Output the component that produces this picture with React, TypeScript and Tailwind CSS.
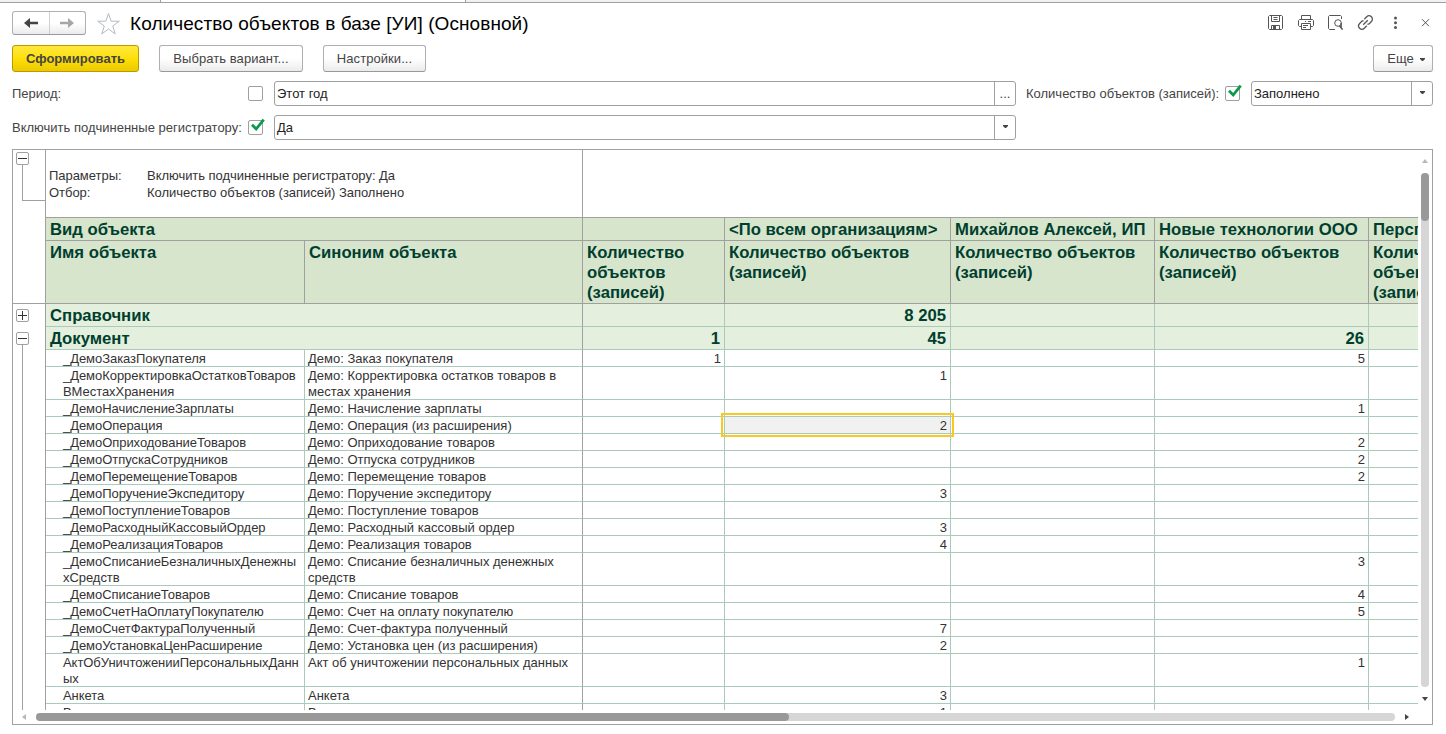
import type { ReactNode } from 'react'

type Row = {
  name: string[]
  synonym: string[]
  values: [string, string, string, string]
  active?: boolean
}

const rows: Row[] = [
  { name: ['_ДемоЗаказПокупателя'], synonym: ['Демо: Заказ покупателя'], values: ['1', '', '', '5'] },
  { name: ['_ДемоКорректировкаОстатковТоваров', 'ВМестахХранения'], synonym: ['Демо: Корректировка остатков товаров в', 'местах хранения'], values: ['', '1', '', ''] },
  { name: ['_ДемоНачислениеЗарплаты'], synonym: ['Демо: Начисление зарплаты'], values: ['', '', '', '1'] },
  { name: ['_ДемоОперация'], synonym: ['Демо: Операция (из расширения)'], values: ['', '2', '', ''], active: true },
  { name: ['_ДемоОприходованиеТоваров'], synonym: ['Демо: Оприходование товаров'], values: ['', '', '', '2'] },
  { name: ['_ДемоОтпускаСотрудников'], synonym: ['Демо: Отпуска сотрудников'], values: ['', '', '', '2'] },
  { name: ['_ДемоПеремещениеТоваров'], synonym: ['Демо: Перемещение товаров'], values: ['', '', '', '2'] },
  { name: ['_ДемоПоручениеЭкспедитору'], synonym: ['Демо: Поручение экспедитору'], values: ['', '3', '', ''] },
  { name: ['_ДемоПоступлениеТоваров'], synonym: ['Демо: Поступление товаров'], values: ['', '', '', ''] },
  { name: ['_ДемоРасходныйКассовыйОрдер'], synonym: ['Демо: Расходный кассовый ордер'], values: ['', '3', '', ''] },
  { name: ['_ДемоРеализацияТоваров'], synonym: ['Демо: Реализация товаров'], values: ['', '4', '', ''] },
  { name: ['_ДемоСписаниеБезналичныхДенежны', 'хСредств'], synonym: ['Демо: Списание безналичных денежных', 'средств'], values: ['', '', '', '3'] },
  { name: ['_ДемоСписаниеТоваров'], synonym: ['Демо: Списание товаров'], values: ['', '', '', '4'] },
  { name: ['_ДемоСчетНаОплатуПокупателю'], synonym: ['Демо: Счет на оплату покупателю'], values: ['', '', '', '5'] },
  { name: ['_ДемоСчетФактураПолученный'], synonym: ['Демо: Счет-фактура полученный'], values: ['', '7', '', ''] },
  { name: ['_ДемоУстановкаЦенРасширение'], synonym: ['Демо: Установка цен (из расширения)'], values: ['', '2', '', ''] },
  { name: ['АктОбУничтоженииПерсональныхДанн', 'ых'], synonym: ['Акт об уничтожении персональных данных'], values: ['', '', '', '1'] },
  { name: ['Анкета'], synonym: ['Анкета'], values: ['', '3', '', ''] },
  { name: ['Встреча'], synonym: ['Встреча'], values: ['', '1', '', ''] },
]

const valueWidths = ['w-[142px]', 'w-[226px]', 'w-[204px]', 'w-[214px]', 'w-[142px]']

const organizations = ['', '<По всем организациям>', 'Михайлов Алексей, ИП', 'Новые технологии ООО', 'Перспектива']

function Button({ className, children }: { className: string; children: ReactNode }) {
  return (
    <button className={`flex h-[27px] items-center justify-center rounded-[3px] border text-[13px] ${className}`}>
      {children}
    </button>
  )
}

const plainButton = 'border-[#b0b0b0] border-b-[#999] bg-linear-to-b from-white from-50% to-[#ebebeb] tracking-[0.06px] text-[#444]'

function Checkbox({ checked }: { checked?: boolean }) {
  return (
    <span className="relative block h-[15px] w-[15px] shrink-0 rounded-[2px] border border-[#a0a0a0] bg-white">
      {checked && (
        <svg className="absolute -top-[3px] left-px" width="16" height="16" viewBox="0 0 16 16" fill="none">
          <path d="M2 6.8 6.2 11 13.7 1.6" stroke="#0a9a4b" strokeWidth="2.8" />
        </svg>
      )}
    </span>
  )
}

function Caret({ className = '' }: { className?: string }) {
  return (
    <svg className={className} width="5" height="3" viewBox="0 0 5 3" fill="#444">
      <path d="M0 0h5v1L3 3H2L0 1z" />
    </svg>
  )
}

function Field({ value, className, children }: { value: string; className: string; children: ReactNode }) {
  return (
    <div className={`flex h-[25px] rounded-[3px] border border-[#a0a0a0] bg-white ${className}`}>
      <span className="flex flex-1 items-center pl-0.5 text-[#222]">{value}</span>
      <span className="flex w-[21px] items-center justify-center border-l border-[#a0a0a0]">{children}</span>
    </div>
  )
}

function Toggle({ open }: { open?: boolean }) {
  return (
    <svg className="ml-[3px] block shrink-0" width="13" height="13" viewBox="0 0 13 13" fill="none">
      <rect x=".5" y=".5" width="12" height="12" rx="1.5" fill="#fff" stroke="#a0a0a0" />
      <path d="M2 6.5h9" stroke="#333" />
      {!open && <path d="M6.5 2v9" stroke="#333" />}
    </svg>
  )
}

function TitleIcons() {
  return (
    <svg className="block" width="168" height="20" viewBox="0 0 168 20" fill="none" stroke="#555">
      {/* save */}
      <path d="M2.5 1.5h12l1 1v12l-1 1h-12l-1-1v-12z" />
      <path d="M4.5 1.5v6h8v-6M6.5 3.5h4M6.5 5.5h4M4.5 15.5v-4h8v4" />
      <path d="M6 12h3v4H6z" fill="#555" stroke="none" />
      {/* print */}
      <path d="M34.5 5.5v-4h9v4M34.5 12.5h-2l-1-1v-5l1-1h13l1 1v5l-1 1h-2M34.5 9.5h9v6h-9zM36 11.5h5M36 13.5h3M38 7.5h1M41 7.5h3" />
      {/* preview */}
      <path d="M68 15.5h-5.5l-1-1v-12l1-1h11l1 1V5" />
      <circle cx="71" cy="9" r="3.3" />
      <path d="M74.2 9v5l1.5 1.5M72.5 12l3 3.5" strokeWidth="1.3" />
      {/* link */}
      <g strokeWidth="1.3">
        <path d="M97.300 5.200 99.700 2.800a3.300 3.300 0 0 1 4.700 4.700L102 9.900l-1.600.5" />
        <path d="M99.700 11.800 97.300 14.200a3.300 3.300 0 0 1-4.700-4.700L95 7.100l1.600-.5" />
        <path d="m96.200 10.800 4.600-4.600" />
      </g>
      <g fill="#555" stroke="none">
        <circle cx="128.5" cy="4" r="1.5" />
        <circle cx="128.5" cy="8.7" r="1.5" />
        <circle cx="128.5" cy="13.4" r="1.5" />
      </g>
      <path d="m155 5.2 7 7m0-7-7 7" />
    </svg>
  )
}

function Lines({ items }: { items: string[] }) {
  return (
    <>
      {items.map(line => (
        <div key={line}>{line}</div>
      ))}
    </>
  )
}

function GroupRow({ title, values }: { title: string; values: string[] }) {
  return (
    <div className="flex h-[23px] bg-[#e4f0dd] text-[16.7px] leading-[22px] font-bold text-[#003f2f]">
      <div className="w-[537px] border-r border-b border-r-[#a0a0a0] border-b-[#aacabb] pt-px pl-1">{title}</div>
      {values.map((v, i) => (
        <div key={i} className={`${valueWidths[i]} border-r border-b border-[#aacabb] pt-px pr-1 text-right`}>{v}</div>
      ))}
    </div>
  )
}

function DetailRow({ row }: { row: Row }) {
  const height = row.name.length > 1 ? 'h-[33px]' : 'h-[17px]'
  return (
    <div className={`flex ${height} leading-4 text-[#333]`}>
      <div className="w-[259px] border-r border-b border-[#aacabb] pt-px pl-[17px] tracking-[-0.05px] whitespace-nowrap"><Lines items={row.name} /></div>
      <div className="w-[278px] border-r border-b border-r-[#a0a0a0] border-b-[#aacabb] pt-px pl-[3px] whitespace-nowrap"><Lines items={row.synonym} /></div>
      {[...row.values, ''].map((v, i) => {
        const active = row.active && i === 1
        return (
          <div
            key={i}
            className={`${valueWidths[i]} relative border-r border-b border-[#aacabb] pt-px pr-[3px] text-right ${active ? 'bg-[#f1f1f1]' : ''}`}
          >
            {v}
            {active && <span className="absolute -top-1 -right-1 -bottom-1 -left-1 z-10 border-2 border-[#f9c922]" />}
          </div>
        )
      })}
    </div>
  )
}

function Gutter() {
  return (
    <div className="flex w-[33px] shrink-0 flex-col border-r border-[#a0a0a0]">
      <div className="flex h-[154px] flex-col border-b border-[#a0a0a0] pt-0.5">
        <Toggle open />
        <div className="ml-[9px] h-9 border-b border-l border-[#a0a0a0]" />
      </div>
      <div className="flex h-[23px] items-center"><Toggle /></div>
      <div className="flex flex-1 flex-col pt-[5px]">
        <Toggle open />
        <div className="ml-[9px] flex-1 border-l border-[#a0a0a0]" />
      </div>
    </div>
  )
}

function Sheet() {
  return (
    <div className="w-[1372px] shrink-0 overflow-hidden">
      <div className="w-[1465px]">
        <div className="flex h-[68px] border-b border-[#a0a0a0] text-[#333]">
          <div className="grid w-[537px] auto-rows-[17px] grid-cols-[98px_1fr] border-r border-[#a0a0a0] pt-[17px] pl-[3px] leading-[17px] tracking-[-0.04px]">
            <span>Параметры:</span>
            <span>Включить подчиненные регистратору: Да</span>
            <span>Отбор:</span>
            <span>Количество объектов (записей) Заполнено</span>
          </div>
        </div>

        <div className="bg-[#d8e5cd] text-[16.7px] leading-5 font-bold text-[#003f2f]">
          <div className="flex h-[23px] leading-[22px] whitespace-nowrap">
            <div className="w-[537px] border-r border-b border-[#a0a0a0] pt-px pl-1">Вид объекта</div>
            {organizations.map((o, i) => (
              <div key={i} className={`${valueWidths[i]} border-r border-b border-[#a0a0a0] pt-px pl-1`}>{o}</div>
            ))}
          </div>
          <div className="flex h-[63px]">
            <div className="w-[259px] border-r border-b border-[#a0a0a0] pt-0.5 pl-1">Имя объекта</div>
            <div className="w-[278px] border-r border-b border-[#a0a0a0] pt-0.5 pl-1">Синоним объекта</div>
            {organizations.map((_, i) => (
              <div key={i} className={`${valueWidths[i]} border-r border-b border-[#a0a0a0] pt-0.5 pr-2 pl-1`}>
                Количество объектов (записей)
              </div>
            ))}
          </div>
        </div>

        <GroupRow title="Справочник" values={['', '8 205', '', '', '']} />
        <GroupRow title="Документ" values={['1', '45', '', '26', '']} />
        {rows.map(r => (
          <DetailRow key={r.name[0]} row={r} />
        ))}
      </div>
    </div>
  )
}

export default function App() {
  return (
    <div className="h-[734px] w-[1446px] overflow-hidden bg-white font-['Liberation_Sans',Arial,sans-serif] text-[13px] text-[#444]">
      {/* bottom edge of the window tabs */}
      <div className="flex h-[3px] border-b border-[#a0a0a0] bg-[#f2f2f2]">
        <div className="ml-40 w-[306px] border-x border-[#a0a0a0] bg-white" />
      </div>

      <header className="flex h-[42px] items-center pr-[11px] pl-3">
        <div className="-mt-0.5 flex h-6 w-[74px] rounded-[3px] border border-[#b0b0b0] border-b-[#999] bg-linear-to-b from-white from-50% to-[#ebebeb]">
          <span className="flex flex-1 items-center justify-center border-r border-[#cfcfcf]">
            <svg width="14" height="10" viewBox="0 0 14 10"><path d="M0 5 6 0v3.7h8v2.6H6V10z" fill="#444" /></svg>
          </span>
          <span className="flex flex-1 items-center justify-center">
            <svg width="14" height="10" viewBox="0 0 14 10"><path d="M14 5 8 0v3.7H0v2.6h8V10z" fill="#a6a6a6" /></svg>
          </span>
        </div>
        <svg className="-mt-px ml-2.5 block" width="24" height="24" viewBox="0 0 24 24" fill="none" stroke="#b4bac2">
          <path d="m12.5 1.5 2.6 7.7h8.2l-6.600 4.800 2.500 7.900-6.700-4.800-6.700 4.800L8.300 14 1.700 9.200h8.200z" />
        </svg>
        <h1 className="ml-2.5 text-[19px] tracking-[0.08px] whitespace-nowrap text-black">Количество объектов в базе [УИ] (Основной)</h1>
        <div className="ml-auto"><TitleIcons /></div>
      </header>

      <div className="flex gap-5 pr-[13px] pl-3">
        <Button className="w-[127px] border-[#b89b00] bg-linear-to-b from-[#ffe838] via-[#fde006] to-[#ecc900] font-bold text-[#444]">Сформировать</Button>
        <Button className={`w-36 ${plainButton}`}>Выбрать вариант...</Button>
        <Button className={`w-[103px] ${plainButton}`}>Настройки...</Button>
        <Button className={`ml-auto w-[60px] gap-[6px] pl-1.5 ${plainButton}`}>Еще <Caret className="mt-0.5" /></Button>
      </div>

      <div className="mt-[9px] flex h-[25px] items-center px-3">
        <span className="w-[236px]">Период:</span>
        <Checkbox />
        <Field value="Этот год" className="ml-[11px] w-[742px]">...</Field>
        <span className="ml-2.5 w-[199px] whitespace-nowrap">Количество объектов (записей):</span>
        <Checkbox checked />
        <Field value="Заполнено" className="ml-[11px] w-[182px]"><Caret className="-mt-0.5" /></Field>
      </div>
      <div className="mt-[9px] flex h-[25px] items-center px-3">
        <span className="w-[236px] whitespace-nowrap">Включить подчиненные регистратору:</span>
        <Checkbox checked />
        <Field value="Да" className="ml-[11px] w-[742px]"><Caret className="-mt-0.5" /></Field>
      </div>

      <main className="mt-[9px] ml-3 h-[576px] w-[1421px] border border-[#a0a0a0]">
        <div className="flex h-[560px]">
          <Gutter />
          <Sheet />
          <div className="flex flex-1 flex-col items-center">
            <svg className="mt-[9px]" width="6" height="4" viewBox="0 0 6 4" fill="#b8b8b8"><path d="M0 4h6L3 0z" /></svg>
            <div className="mt-[10px] h-[514px] w-2 rounded-full bg-[#d6d6d6]">
              <div className="h-12 rounded-full bg-[#999]" />
            </div>
            <svg className="mt-2.5" width="6" height="4" viewBox="0 0 6 4" fill="#444"><path d="M0 0h6L3 4z" /></svg>
          </div>
        </div>
        <div className="flex h-[14px] items-center pl-[9px]">
          <svg width="4" height="6" viewBox="0 0 4 6" fill="#b8b8b8"><path d="M4 0v6L0 3z" /></svg>
          <div className="ml-2.5 h-2 w-[1359px] rounded-full bg-[#d6d6d6]">
            <div className="h-2 w-[753px] rounded-full bg-[#999]" />
          </div>
          <svg className="ml-2.5" width="4" height="6" viewBox="0 0 4 6" fill="#444"><path d="M0 0v6l4-3z" /></svg>
        </div>
      </main>
    </div>
  )
}
